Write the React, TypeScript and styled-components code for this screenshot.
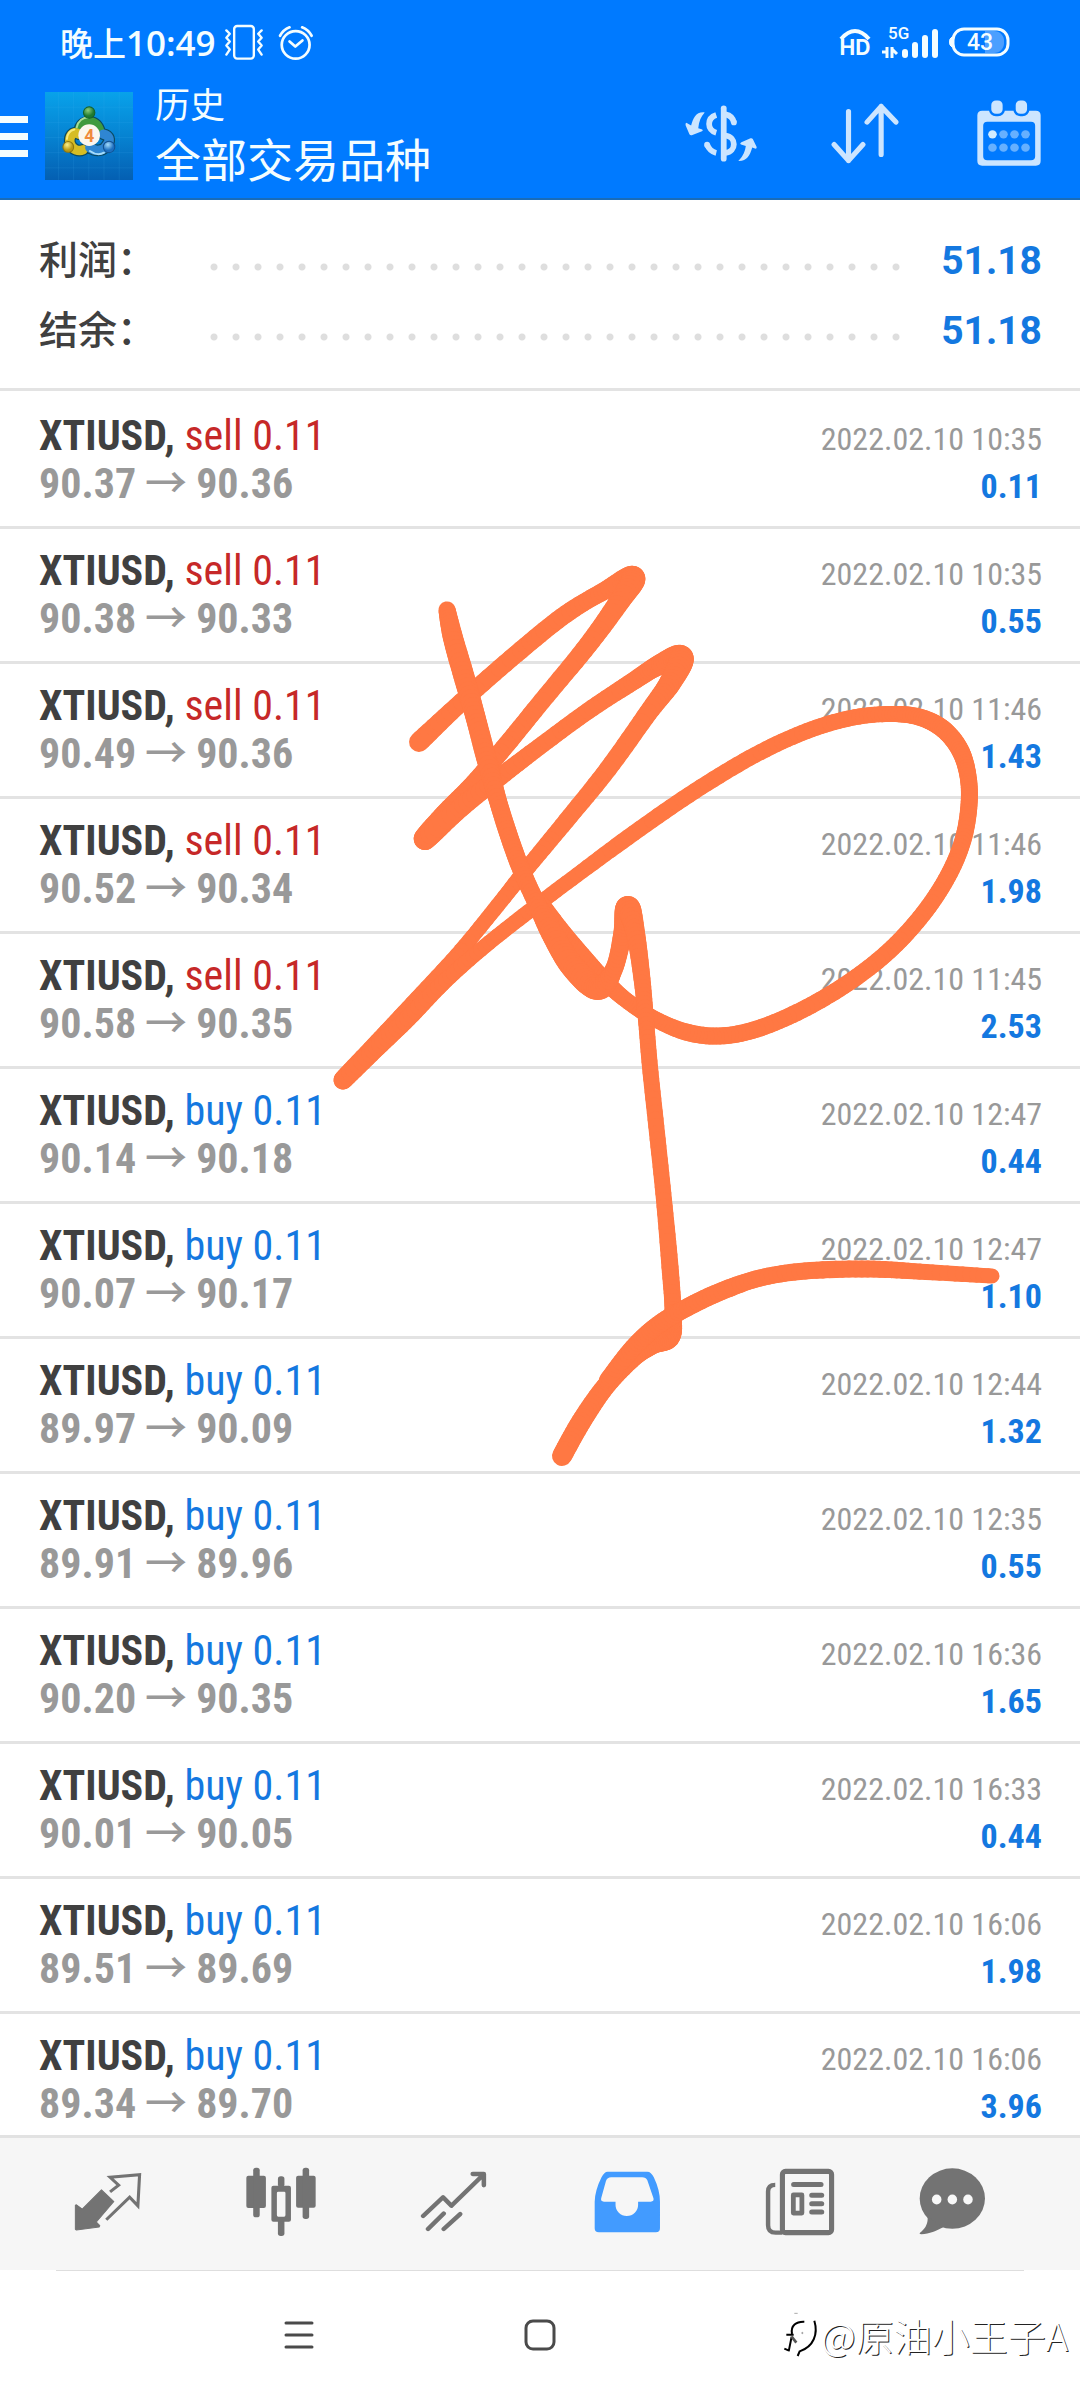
import React from 'react';
import styled, { createGlobalStyle, css } from 'styled-components';

const GlobalStyle = createGlobalStyle`
  *, *::before, *::after { box-sizing: border-box; }
  body {
    margin: 0;
    background: #fff;
    font-family: Roboto, 'Noto Sans CJK SC', sans-serif;
  }
`;

const condensed = css`
  font-family: 'Roboto Condensed', Roboto, 'Noto Sans CJK SC', sans-serif;
`;

const Page = styled.div`
  position: relative;
  display: flex;
  flex-direction: column;
  height: 100vh;
  overflow: hidden;
  background: #fff;
`;

const Header = styled.header`
  flex: none;
  background: #007aff;
  border-bottom: 2px solid #1a6cb8;
  color: #f4fdff;
`;

const StatusBar = styled.div`
  display: flex;
  align-items: center;
  justify-content: space-between;
  height: 84px;
  padding: 0 70px 0 60px;
`;

const StatusGroup = styled.div<{ $gap: number }>`
  display: flex;
  align-items: center;
  gap: ${(p) => p.$gap}px;
`;

const Clock = styled.span`
  font-family: 'Noto Sans CJK SC', sans-serif;
  font-size: 33px;
  font-weight: 500;
  line-height: 40px;
`;

const ClockDigits = styled.span`
  font-family: 'Open Sans', sans-serif;
  font-size: 35px;
  font-weight: 600;
`;

const AppBar = styled.div`
  display: flex;
  align-items: center;
  height: 114px;
  padding: 0 35px 16px 0;
`;

const IconButton = styled.button<{ $width: number }>`
  display: flex;
  flex: none;
  align-items: center;
  justify-content: center;
  width: ${(p) => p.$width}px;
  padding: 0;
  border: 0;
  background: none;
  color: inherit;
  cursor: pointer;
`;

const Lead = styled.div`
  display: flex;
  flex: none;
  align-items: center;
  gap: 17px;
  padding-top: 6px;
`;

const Titles = styled.div`
  flex: 1;
  min-width: 0;
  padding-left: 22px;
  font-family: 'Noto Sans CJK SC', sans-serif;
  white-space: nowrap;
`;

const Overline = styled.p`
  margin: 0;
  font-size: 35px;
  line-height: 48px;
`;

const Title = styled.h1`
  margin: 0;
  font-size: 46px;
  font-weight: 400;
  line-height: 60px;
`;

const Actions = styled.div`
  display: flex;
  gap: 72px;
  color: #cce5ff;
`;

const Summary = styled.dl`
  flex: none;
  margin: 0;
  padding: 24px 38px 24px 39px;
  border-bottom: 3px solid #e3e3e3;
`;

const SummaryRow = styled.div`
  display: flex;
  align-items: baseline;
  height: 70px;
`;

const SummaryLabel = styled.dt`
  width: 164px;
  color: #404040;
  font-family: 'Noto Sans CJK SC', sans-serif;
  font-size: 39px;
  font-weight: 500;
  line-height: 66px;
  white-space: nowrap;
`;

const Leader = styled.span`
  flex: 1;
  align-self: center;
  height: 8px;
  margin-top: 16px;
  background: radial-gradient(circle at center, #dedede 3px, transparent 4px) 0 0 / 22px 8px repeat-x;
`;

const SummaryValue = styled.dd`
  width: 135px;
  margin: 0;
  color: #1478e0;
  font-size: 39px;
  font-weight: 700;
  line-height: 48px;
  text-align: right;
`;

const DealList = styled.ul`
  flex: 1;
  min-height: 0;
  margin: 0;
  padding: 3px 0 0;
  overflow: hidden;
  list-style: none;
  ${condensed}
`;

const Deal = styled.li`
  padding: 18px 38px 18px 39px;
  border-bottom: 3px solid #e3e3e3;
`;

const DealLine = styled.div`
  display: flex;
  align-items: baseline;
  justify-content: space-between;
  height: 48px;
  white-space: nowrap;
`;

const Symbol = styled.strong`
  color: #404040;
  font-size: 42px;
  font-weight: 700;
  line-height: 48px;
`;

const Side = styled.span<{ $side: string }>`
  color: ${(p) => (p.$side === 'sell' ? '#c62828' : '#1478e0')};
  font-weight: 400;
`;

const Prices = styled.span`
  display: flex;
  align-items: baseline;
  gap: 9px;
  color: #999;
  font-size: 42px;
  font-weight: 700;
  line-height: 48px;
`;

const Arrow = styled.span`
  font-family: 'Noto Sans CJK SC', sans-serif;
  font-weight: 500;
  line-height: 40px;
`;

const Time = styled.time`
  color: #999;
  font-size: 32px;
  line-height: 40px;
`;

const Profit = styled.span`
  color: #1478e0;
  font-size: 34px;
  font-weight: 700;
  line-height: 40px;
`;

const TabBar = styled.nav`
  display: grid;
  flex: none;
  grid-template-columns: repeat(5, 173fr) 131fr;
  height: 135px;
  padding: 0 62px 5px 21px;
  border-top: 3px solid #e2e2e2;
  background: #f6f6f6;
`;

const Tab = styled.button<{ $active?: boolean }>`
  display: flex;
  align-items: center;
  justify-content: center;
  padding: 0;
  border: 0;
  background: none;
  color: ${(p) => (p.$active ? '#429bff' : '#737373')};
  cursor: pointer;
`;

const SystemBar = styled.footer`
  position: relative;
  display: flex;
  flex: none;
  justify-content: center;
  height: 130px;
  color: #4a4a4a;

  &::before {
    content: '';
    position: absolute;
    top: 0;
    left: 56px;
    right: 56px;
    height: 1px;
    background: #dedede;
  }
`;

const SystemKeys = styled.div`
  display: grid;
  grid-template-columns: repeat(3, 241px);
  justify-items: center;
  align-items: center;
`;

const Watermark = styled.div`
  position: absolute;
  right: 12px;
  top: 40px;
  display: flex;
  align-items: center;
  color: #fff;
  font-family: 'Noto Sans CJK SC', sans-serif;
  font-size: 38px;
  font-weight: 300;
  line-height: 48px;
  text-shadow: 1px 1px 0 #222;
  white-space: nowrap;
`;

const Scribble = styled.svg`
  position: absolute;
  top: 540px;
  left: 320px;
  pointer-events: none;
`;

type DrawProps = { w: number; h: number; box: string; children: React.ReactNode };

function Drawing({ w, h, box, children }: DrawProps) {
  return (
    <svg width={w} height={h} viewBox={box} preserveAspectRatio="none" fill="none" aria-hidden="true">
      {children}
    </svg>
  );
}

const round = { strokeLinecap: 'round', strokeLinejoin: 'round' } as const;

const VibrateIcon = () => (
  <Drawing w={40} h={37} box="652 70 118 110">
    <g stroke="currentColor" strokeWidth="7" {...round}>
      <rect x="682" y="76" width="58" height="97" rx="9" />
      <path d="M659 89l10 10-10 12 10 11-10 12 10 12-10 15M763 89l-10 10 10 12-10 11 10 12-10 12 10 15" />
    </g>
  </Drawing>
);

const AlarmIcon = () => (
  <Drawing w={36} h={37} box="812 70 106 110">
    <g stroke="currentColor" strokeWidth="8" {...round}>
      <circle cx="864" cy="132" r="41" />
      <path d="M846 122l17 15 21-18M818 105Q828 87 846 80M911 105Q901 87 883 80" />
    </g>
  </Drawing>
);

const HdIcon = () => (
  <svg width="36" height="36" viewBox="0 0 36 36" role="img" aria-label="HD">
    <path d="M4 15Q18 -1 32 15" fill="none" stroke="currentColor" strokeWidth="4" />
    <text x="18" y="31" textAnchor="middle" fontFamily="Inter, sans-serif" fontSize="21" fontWeight="700" fill="currentColor">HD</text>
  </svg>
);

const SignalIcon = () => (
  <svg width="58" height="40" viewBox="0 0 58 40" role="img" aria-label="5G">
    <text x="6" y="17" fontFamily="Roboto, sans-serif" fontSize="17" fontWeight="500" fill="currentColor">5G</text>
    <g stroke="currentColor" strokeWidth="3" fill="none">
      <path d="M5 36V25M0 30h4M10 36V25M10 27l5 5" />
    </g>
    <g fill="currentColor">
      <rect x="20" y="27" width="6" height="9" rx="3" />
      <rect x="30" y="20" width="6" height="16" rx="3" />
      <rect x="40" y="13" width="6" height="23" rx="3" />
      <rect x="50" y="7" width="6" height="29" rx="3" />
    </g>
  </svg>
);

const BatteryIcon = () => (
  <svg width="61" height="32" viewBox="0 -1 61 32" role="img" aria-label="43%">
    <path d="M36 4h9a10 10 0 0 1 10 11a10 10 0 0 1-10 11h-9z" fill="#4b9fff" />
    <rect x="4" y="2" width="55" height="26" rx="11" fill="none" stroke="currentColor" strokeWidth="3" />
    <path d="M3 10v10a6 6 0 0 1 0-10z" fill="currentColor" stroke="currentColor" />
    <text x="31" y="23" textAnchor="middle" fontFamily="Roboto, sans-serif" fontSize="23" fontWeight="500" fill="currentColor">43</text>
  </svg>
);

const MenuIcon = () => (
  <svg width="28" height="41" viewBox="0 0 28 41" fill="currentColor" aria-hidden="true">
    <path d="M0 0h28v7H0zM0 17h28v7H0zM0 34h28v7H0z" />
  </svg>
);

const AppLogo = () => (
  <svg width="88" height="88" viewBox="43 37 261 261" role="img" aria-label="MetaTrader 4">
    <defs>
      <linearGradient id="sky" x1="0" y1="0" x2="0" y2="1">
        <stop offset="0" stopColor="#08a2ea" />
        <stop offset="0.5" stopColor="#0683d2" />
        <stop offset="1" stopColor="#045fb2" />
      </linearGradient>
      <radialGradient id="leaf" cx="0.4" cy="0.3"><stop offset="0" stopColor="#8fce7a" /><stop offset="1" stopColor="#1f7a30" /></radialGradient>
      <radialGradient id="gold" cx="0.4" cy="0.3"><stop offset="0" stopColor="#fbf08a" /><stop offset="1" stopColor="#b99a14" /></radialGradient>
      <radialGradient id="aqua" cx="0.4" cy="0.3"><stop offset="0" stopColor="#a5dcfb" /><stop offset="1" stopColor="#1c6fc0" /></radialGradient>
    </defs>
    <path fill="url(#sky)" d="M43 37h261v261H43z" />
    <path stroke="#4ab4ee" strokeOpacity="0.2" strokeWidth="2" d="M83 37v261M128 37v261M173 37v261M218 37v261M263 37v261M43 82h261M43 127h261M43 172h261M43 217h261M43 262h261" />
    <g fill="none" strokeLinecap="round">
      <path stroke="#0b4a63" strokeWidth="35" d="M146 146C154 116 198 116 206 156M144 162C124 150 114 170 117 188C124 210 144 214 156 208M216 162C234 166 238 180 228 192C218 214 192 214 176 202" />
      <path stroke="#3f9a3f" strokeWidth="28" d="M146 146C154 116 198 116 206 156" />
      <path stroke="#a9dc98" strokeWidth="6" d="M137 142C142 120 156 113 172 112" />
      <path stroke="#d6bd25" strokeWidth="28" d="M144 162C124 150 114 170 117 188C124 210 144 214 156 208" />
      <path stroke="#f7ea7c" strokeWidth="6" d="M108 176C109 160 118 151 130 148" />
      <path stroke="#2f86d2" strokeWidth="28" d="M216 162C234 166 238 180 228 192C218 214 192 214 176 202" />
      <path stroke="#a5dcfb" strokeWidth="6" d="M176 212C190 222 206 224 218 217" />
    </g>
    <circle cx="174" cy="98" r="17" fill="url(#leaf)" stroke="#15602a" strokeWidth="3" />
    <circle cx="112" cy="200" r="16" fill="url(#gold)" stroke="#8c7510" strokeWidth="3" />
    <circle cx="233" cy="200" r="17" fill="url(#aqua)" stroke="#135090" strokeWidth="3" />
    <circle cx="174" cy="165" r="32" fill="#fbf6ee" />
    <text x="174" y="184" textAnchor="middle" fontFamily="Roboto, sans-serif" fontSize="52" fontWeight="700" fill="#f08a3c">4</text>
  </svg>
);

const ConvertIcon = () => (
  <Drawing w={73} h={57} box="422 315 212 170">
    <g stroke="currentColor" strokeWidth="17">
      <path d="M536 325V475" strokeLinecap="round" />
      <path d="M514 345C486 354 486 390 514 398M541 343C556 346 564 356 566 368M487 433C492 446 501 455 514 458M541 406C574 410 574 454 541 458" />
      <path d="M566 366v1M487 433v1" strokeLinecap="round" />
    </g>
    <g fill="currentColor">
      <path d="M480 337C455 334 446 354 440 376L426 368Q422 370 424 376L435 402Q437 406 442 405L472 393Q477 389 471 387L461 384C463 364 469 349 480 337z" />
      <path d="M579 482C594 466 599 452 601 437L587 433Q582 430 588 426L615 414Q620 413 622 417L633 440Q634 446 628 445L620 442C613 466 604 483 579 482z" />
    </g>
  </Drawing>
);

const SortIcon = () => (
  <Drawing w={68} h={61} box="845 315 198 179">
    <path stroke="currentColor" strokeWidth="15" {...round} d="M896 340V484M854 437L896 484L938 437M991 466V325M950 371L991 325L1034 371" />
  </Drawing>
);

const CalendarIcon = () => (
  <Drawing w={64} h={66} box="1267 301 186 198">
    <path fill="currentColor" fillRule="evenodd" d="M1282 333H1438Q1452 333 1452 347V484Q1452 498 1438 498H1282Q1268 498 1268 484V347Q1268 333 1282 333zM1297 366Q1285 366 1285 378V470Q1285 482 1297 482H1424Q1436 482 1436 470V378Q1436 366 1424 366z" />
    <g fill="currentColor" stroke="#007aff" strokeWidth="7">
      <rect x="1305" y="299" width="40" height="47" rx="17" />
      <rect x="1376" y="299" width="40" height="47" rx="17" />
    </g>
    <g fill="#66b0ff">
      {[1344, 1376, 1408].map((x) => <circle key={x} cx={x} cy="404" r="12.5" />)}
      {[1312, 1344, 1376, 1408].map((x) => <circle key={x} cx={x} cy="444" r="12.5" />)}
    </g>
    <circle cx="1312" cy="404" r="12.5" fill="#d2ecff" />
  </Drawing>
);

const QuotesIcon = () => (
  <Drawing w={68} h={59} box="216 187 198 178">
    <path fill="currentColor" stroke="currentColor" strokeWidth="3" strokeLinejoin="round" d="M296 241L332 276L281 338L291 349L289 353L223 362L220 360V287L223 286L240 299z" />
    <path stroke="currentColor" strokeWidth="9" d="M321 247L346 227L321 203L407 195L402 289L378 263L310 331" />
  </Drawing>
);

const ChartIcon = () => (
  <Drawing w={70} h={69} box="714 172 204 207">
    <g fill="currentColor">
      <rect x="715" y="198" width="57" height="97" rx="6" />
      <rect x="735" y="174" width="19" height="149" rx="8" />
      <rect x="860" y="198" width="57" height="96" rx="6" />
      <rect x="879" y="174" width="19" height="154" rx="8" />
      <rect x="807" y="200" width="19" height="32" rx="8" />
      <rect x="807" y="325" width="19" height="54" rx="8" />
      <path fillRule="evenodd" d="M794 228H839Q845 228 845 234V330Q845 336 839 336H794Q788 336 788 330V234Q788 228 794 228zM808 246Q804 246 804 250V316Q804 321 808 321H825Q829 321 829 316V250Q829 246 825 246z" />
    </g>
  </Drawing>
);

const TradeIcon = () => (
  <Drawing w={67} h={61} box="1222 181 192 184">
    <path stroke="currentColor" strokeWidth="13" {...round} d="M1231 317L1288 260L1312 286L1402 194M1373 190H1405V224M1290 309L1245 356M1337 311L1290 356" />
  </Drawing>
);

const HistoryIcon = () => (
  <Drawing w={67} h={62} box="157 180 196 186">
    <path fill="currentColor" fillRule="evenodd" d="M197 182H313Q324 182 332 199Q350 238 350 272V352Q350 364 338 364H171Q159 364 159 352V272Q160 238 179 199Q187 182 197 182zM207 199Q196 199 192 210L178 262Q176 272 186 272H220V282A33 33 0 0 0 286 282V272H323Q333 272 331 262L313 208Q309 199 298 199z" />
  </Drawing>
);

const NewsIcon = () => (
  <Drawing w={70} h={68} box="655 172 205 202">
    <g stroke="currentColor" {...round}>
      <rect x="706" y="182" width="144" height="182" rx="9" strokeWidth="15" />
      <path strokeWidth="13" strokeLinecap="butt" d="M685 222Q664 222 664 242V342Q664 364 686 364H706" />
      <path strokeWidth="15" d="M739 221H819M792 253H821M792 278H821M792 303H821" />
      <rect x="738" y="252" width="25" height="54" strokeWidth="14" />
    </g>
  </Drawing>
);

const ChatIcon = () => (
  <Drawing w={67} h={67} box="1101 172 197 202">
    <g fill="currentColor">
      <ellipse cx="1199" cy="264" rx="96" ry="91" />
      <path d="M1126 318C1129 340 1118 357 1104 367Q1100 372 1108 372C1132 371 1152 362 1172 351z" />
    </g>
    <g fill="#f8f8f8">
      <ellipse cx="1153" cy="267" rx="14" ry="15" />
      <ellipse cx="1199" cy="267" rx="14" ry="15" />
      <ellipse cx="1245" cy="267" rx="14" ry="15" />
    </g>
  </Drawing>
);

const WatermarkLogo = () => (
  <svg width="40" height="50" viewBox="20 50 120 150" fill="none" stroke="#000" aria-hidden="true">
    <path strokeWidth="6" d="M53 122C48 96 66 84 90 85" />
    <path strokeWidth="6" d="M120 82C132 122 118 160 76 174L70 188" />
    <path strokeWidth="6" d="M36 124H58M52 130L43 174M30 166L44 172" />
    <path stroke="#555" strokeWidth="8" d="M52 130L66 148" />
    <circle cx="84" cy="119" r="2" />
    <path stroke="#aaa" strokeWidth="3" d="M60 60h10" />
  </svg>
);

type Dot = [number, number, number];

const zigzagLoop: Dot[] = [
  [419, 742, 10], [467, 697, 9], [521, 650, 9], [566, 614, 9], [606, 590, 9], [633, 578, 12],
  [619, 602, 10.5], [588, 645, 9.5], [542, 701, 9], [507, 744, 9], [474, 783, 9], [445, 814, 10], [425, 839, 11],
  [460, 808, 10], [501, 776, 9], [543, 744, 8.5], [588, 711, 8.5], [632, 682, 9], [659, 665, 10], [681, 658, 12.5],
  [670, 683, 11], [648, 713, 9.5], [608, 769, 9], [566, 821, 8.5], [529, 866, 8], [494, 910, 7.5], [457, 955, 7.5],
  [409, 1009, 9], [375, 1046, 9.5], [343, 1080, 9.5],
  [374, 1050, 9.5], [408, 1018, 9], [446, 980, 8], [485, 946, 7.5], [528, 912, 7.5], [577, 875, 7.5], [634, 833, 8],
  [695, 791, 8], [755, 755, 8], [807, 731, 8], [851, 718, 8], [889, 714, 8], [919, 717, 8.5], [943, 729, 9],
  [960, 750, 9], [968, 776, 8.5], [969, 805, 8.5], [963, 840, 8.5], [948, 876, 8.5], [923, 914, 8.5], [889, 951, 8.5],
  [848, 983, 8.5], [802, 1010, 8.5], [757, 1029, 8.5], [720, 1036, 8.5], [686, 1032, 8.5], [653, 1018, 8],
  [626, 1000, 8], [606, 982, 8.5], [584, 958, 9], [561, 930, 8.5], [539, 901, 8.5],
];

const hook: Dot[] = [
  [447, 610, 8.5], [453, 638, 10], [465, 680, 10.5], [476, 719, 10], [487, 761, 10], [498, 801, 9], [509, 836, 9],
  [521, 869, 9], [536, 902, 9], [553, 935, 11], [573, 967, 12], [598, 988, 12], [614, 969, 9], [623, 933, 9.5],
  [628, 908, 12], [636, 936, 9.5], [642, 979, 8.5], [646, 1020, 8], [650, 1067, 8], [657, 1133, 8], [664, 1200, 8],
  [670, 1267, 8.5], [673, 1313, 8.5], [670, 1337, 10], [653, 1344, 10], [633, 1357, 10], [605, 1387, 9.5],
  [581, 1422, 10], [562, 1456, 10],
];

const sweep: Dot[] = [
  [607, 1380, 8], [633, 1348, 9], [658, 1325, 9], [688, 1307, 9], [722, 1291, 9], [760, 1278, 8.5], [805, 1271, 8.5],
  [868, 1269, 8.5], [926, 1272, 8], [992, 1276, 7.5],
];

/* Catmull-Rom interpolation of centre points and brush radius. */
function smooth(points: Dot[], steps = 10): Dot[] {
  const out: Dot[] = [];
  for (let i = 0; i < points.length - 1; i += 1) {
    const a = points[Math.max(i - 1, 0)];
    const b = points[i];
    const c = points[i + 1];
    const d = points[Math.min(i + 2, points.length - 1)];
    for (let s = 0; s < steps; s += 1) {
      const t = s / steps;
      const at = (k: number) =>
        0.5 * (2 * b[k] + (c[k] - a[k]) * t + (2 * a[k] - 5 * b[k] + 4 * c[k] - d[k]) * t * t +
          (3 * b[k] - a[k] - 3 * c[k] + d[k]) * t * t * t);
      out.push([at(0), at(1), at(2)]);
    }
  }
  out.push(points[points.length - 1]);
  return out;
}

function Brush({ points }: { points: Dot[] }) {
  const p = smooth(points);
  return (
    <g stroke="#ff7843" strokeLinecap="round">
      {p.slice(1).map((q, i) => (
        <line key={i} x1={p[i][0]} y1={p[i][1]} x2={q[0]} y2={q[1]} strokeWidth={q[2] * 2} />
      ))}
    </g>
  );
}

const deals = [
  ['sell', '90.37', '90.36', '2022.02.10 10:35', '0.11'],
  ['sell', '90.38', '90.33', '2022.02.10 10:35', '0.55'],
  ['sell', '90.49', '90.36', '2022.02.10 11:46', '1.43'],
  ['sell', '90.52', '90.34', '2022.02.10 11:46', '1.98'],
  ['sell', '90.58', '90.35', '2022.02.10 11:45', '2.53'],
  ['buy', '90.14', '90.18', '2022.02.10 12:47', '0.44'],
  ['buy', '90.07', '90.17', '2022.02.10 12:47', '1.10'],
  ['buy', '89.97', '90.09', '2022.02.10 12:44', '1.32'],
  ['buy', '89.91', '89.96', '2022.02.10 12:35', '0.55'],
  ['buy', '90.20', '90.35', '2022.02.10 16:36', '1.65'],
  ['buy', '90.01', '90.05', '2022.02.10 16:33', '0.44'],
  ['buy', '89.51', '89.69', '2022.02.10 16:06', '1.98'],
  ['buy', '89.34', '89.70', '2022.02.10 16:06', '3.96'],
];

const summary = [
  ['利润', '51.18'],
  ['结余', '51.18'],
];

const tabs = [
  { name: '行情', icon: <QuotesIcon /> },
  { name: '图表', icon: <ChartIcon /> },
  { name: '交易', icon: <TradeIcon /> },
  { name: '历史', icon: <HistoryIcon />, active: true },
  { name: '新闻', icon: <NewsIcon /> },
  { name: '消息', icon: <ChatIcon /> },
];

export default function App() {
  return (
    <Page lang="zh-CN">
      <GlobalStyle />
      <Header>
        <StatusBar>
          <StatusGroup $gap={8}>
            <Clock>晚上<ClockDigits>10:49</ClockDigits></Clock>
            <StatusGroup $gap={14}>
              <VibrateIcon />
              <AlarmIcon />
            </StatusGroup>
          </StatusGroup>
          <StatusGroup $gap={9}>
            <HdIcon />
            <SignalIcon />
            <BatteryIcon />
          </StatusGroup>
        </StatusBar>
        <AppBar>
          <Lead>
            <IconButton $width={28} aria-label="菜单"><MenuIcon /></IconButton>
            <AppLogo />
          </Lead>
          <Titles>
            <Overline>历史</Overline>
            <Title>全部交易品种</Title>
          </Titles>
          <Actions>
            <IconButton $width={72} aria-label="货币"><ConvertIcon /></IconButton>
            <IconButton $width={72} aria-label="排序"><SortIcon /></IconButton>
            <IconButton $width={72} aria-label="日期"><CalendarIcon /></IconButton>
          </Actions>
        </AppBar>
      </Header>

      <Summary>
        {summary.map(([label, value]) => (
          <SummaryRow key={label}>
            <SummaryLabel>{`${label}\uFF1A`}</SummaryLabel>
            <Leader />
            <SummaryValue>{value}</SummaryValue>
          </SummaryRow>
        ))}
      </Summary>

      <DealList>
        {deals.map(([side, open, close, time, profit], i) => (
          <Deal key={i}>
            <DealLine>
              <Symbol>XTIUSD, <Side $side={side}>{side} 0.11</Side></Symbol>
              <Time>{time}</Time>
            </DealLine>
            <DealLine>
              <Prices>{open}<Arrow>→</Arrow>{close}</Prices>
              <Profit>{profit}</Profit>
            </DealLine>
          </Deal>
        ))}
      </DealList>

      <TabBar>
        {tabs.map((tab) => (
          <Tab key={tab.name} $active={tab.active} aria-label={tab.name}>{tab.icon}</Tab>
        ))}
      </TabBar>

      <SystemBar>
        <SystemKeys>
          <IconButton $width={48} aria-label="最近任务">
            <svg width="30" height="30" viewBox="0 0 30 30" stroke="currentColor" strokeWidth="3" strokeLinecap="round" aria-hidden="true">
              <path d="M2 3h26M2 15h26M2 27h26" />
            </svg>
          </IconButton>
          <IconButton $width={48} aria-label="主屏幕">
            <svg width="32" height="32" viewBox="0 0 32 32" fill="none" stroke="currentColor" strokeWidth="3" aria-hidden="true">
              <rect x="2" y="2" width="28" height="28" rx="7" />
            </svg>
          </IconButton>
        </SystemKeys>
        <Watermark><WatermarkLogo />@原油小王子A</Watermark>
      </SystemBar>

      <Scribble width="700" height="940" viewBox="320 540 700 940" aria-hidden="true">
        <Brush points={zigzagLoop} />
        <Brush points={hook} />
        <Brush points={sweep} />
      </Scribble>
    </Page>
  );
}
